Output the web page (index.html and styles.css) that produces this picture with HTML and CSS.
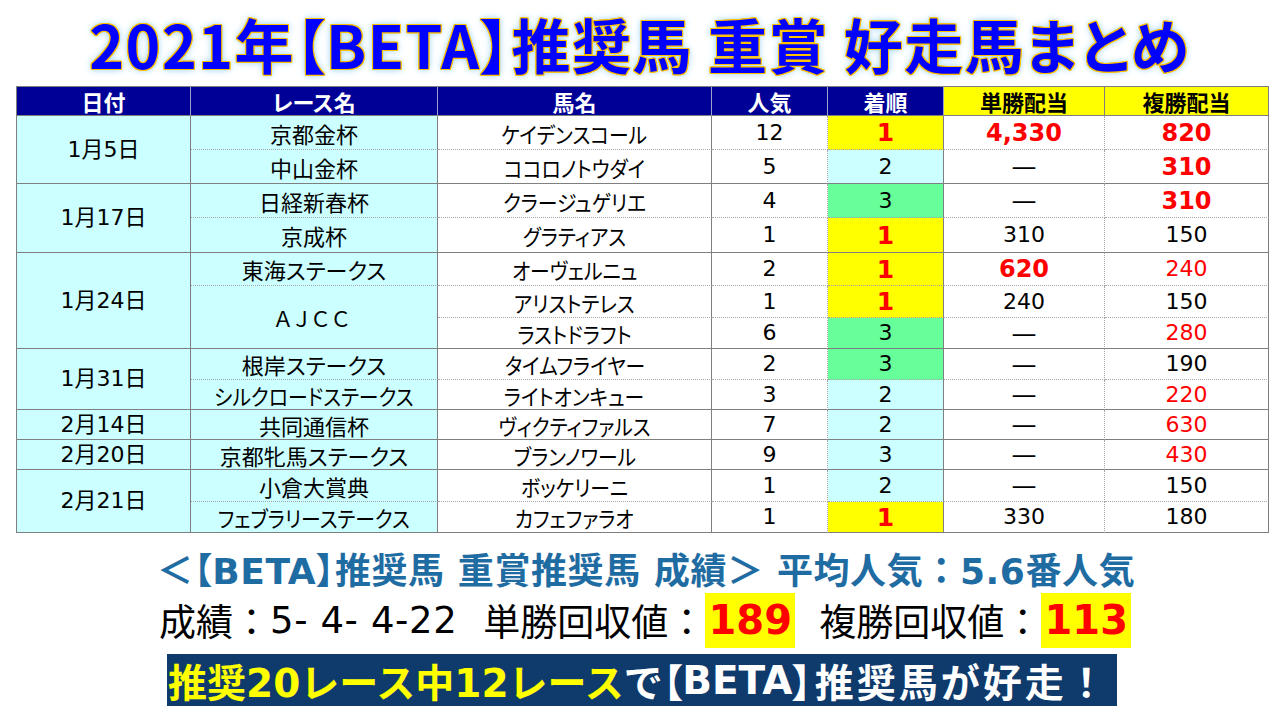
FILE: index.html
```html
<!DOCTYPE html>
<html lang="ja">
<head>
<meta charset="utf-8">
<title>2021年【BETA】推奨馬 重賞 好走馬まとめ</title>
<link rel="stylesheet" href="styles.css">
</head>
<body>
<div class="page">
  <h1 class="title">2021年【BETA】推奨馬 重賞 好走馬まとめ</h1>

  <table class="results">
    <colgroup>
      <col class="c-date"><col class="c-race"><col class="c-horse"><col class="c-pop"><col class="c-rank"><col class="c-win"><col class="c-place">
    </colgroup>
    <thead>
      <tr class="h-head">
        <th class="hd">日付</th>
        <th class="hd">レース名</th>
        <th class="hd">馬名</th>
        <th class="hd">人気</th>
        <th class="hd">着順</th>
        <th class="hd hd-y">単勝配当</th>
        <th class="hd hd-y">複勝配当</th>
      </tr>
    </thead>
    <tbody>
      <tr class="h34">
        <td class="date" rowspan="2">1月5日</td>
        <td class="race dot"><span>京都金杯</span></td>
        <td class="horse dot"><span>ケイデンスコール</span></td>
        <td class="num dot dr">12</td>
        <td class="num dot r1">1</td>
        <td class="num dot dr big">4,330</td>
        <td class="num dot big">820</td>
      </tr>
      <tr class="h34">
        <td class="race"><span>中山金杯</span></td>
        <td class="horse"><span>ココロノトウダイ</span></td>
        <td class="num dr">5</td>
        <td class="num r2">2</td>
        <td class="num dr dash">—</td>
        <td class="num big">310</td>
      </tr>
      <tr class="h34">
        <td class="date" rowspan="2">1月17日</td>
        <td class="race dot"><span>日経新春杯</span></td>
        <td class="horse dot"><span>クラージュゲリエ</span></td>
        <td class="num dot dr">4</td>
        <td class="num dot r3">3</td>
        <td class="num dot dr dash">—</td>
        <td class="num dot big">310</td>
      </tr>
      <tr class="h35">
        <td class="race"><span>京成杯</span></td>
        <td class="horse"><span>グラティアス</span></td>
        <td class="num dr">1</td>
        <td class="num r1">1</td>
        <td class="num dr">310</td>
        <td class="num">150</td>
      </tr>
      <tr class="h33">
        <td class="date" rowspan="3">1月24日</td>
        <td class="race dot"><span>東海ステークス</span></td>
        <td class="horse dot"><span>オーヴェルニュ</span></td>
        <td class="num dot dr">2</td>
        <td class="num dot r1">1</td>
        <td class="num dot dr big">620</td>
        <td class="num dot red">240</td>
      </tr>
      <tr class="h32">
        <td class="race" rowspan="2"><span class="ajcc">ＡＪＣＣ</span></td>
        <td class="horse dot"><span>アリストテレス</span></td>
        <td class="num dot dr">1</td>
        <td class="num dot r1">1</td>
        <td class="num dot dr">240</td>
        <td class="num dot">150</td>
      </tr>
      <tr class="h31">
        <td class="horse"><span>ラストドラフト</span></td>
        <td class="num dr">6</td>
        <td class="num r3">3</td>
        <td class="num dr dash">—</td>
        <td class="num red">280</td>
      </tr>
      <tr class="h31">
        <td class="date" rowspan="2">1月31日</td>
        <td class="race dot"><span>根岸ステークス</span></td>
        <td class="horse dot"><span>タイムフライヤー</span></td>
        <td class="num dot dr">2</td>
        <td class="num dot r3">3</td>
        <td class="num dot dr dash">—</td>
        <td class="num dot">190</td>
      </tr>
      <tr class="h30">
        <td class="race"><span class="kana">シルクロードステークス</span></td>
        <td class="horse"><span>ライトオンキュー</span></td>
        <td class="num dr">3</td>
        <td class="num r2">2</td>
        <td class="num dr dash">—</td>
        <td class="num red">220</td>
      </tr>
      <tr class="h30">
        <td class="date">2月14日</td>
        <td class="race"><span>共同通信杯</span></td>
        <td class="horse"><span>ヴィクティファルス</span></td>
        <td class="num dr">7</td>
        <td class="num r2">2</td>
        <td class="num dr dash">—</td>
        <td class="num red">630</td>
      </tr>
      <tr class="h30">
        <td class="date">2月20日</td>
        <td class="race"><span>京都牝馬ステークス</span></td>
        <td class="horse"><span>ブランノワール</span></td>
        <td class="num dr">9</td>
        <td class="num r2">3</td>
        <td class="num dr dash">—</td>
        <td class="num red">430</td>
      </tr>
      <tr class="h32">
        <td class="date" rowspan="2">2月21日</td>
        <td class="race dot"><span>小倉大賞典</span></td>
        <td class="horse dot"><span>ボッケリーニ</span></td>
        <td class="num dot dr">1</td>
        <td class="num dot r2">2</td>
        <td class="num dot dr dash">—</td>
        <td class="num dot">150</td>
      </tr>
      <tr class="h31">
        <td class="race"><span class="kana">フェブラリーステークス</span></td>
        <td class="horse"><span>カフェファラオ</span></td>
        <td class="num dr">1</td>
        <td class="num r1">1</td>
        <td class="num dr">330</td>
        <td class="num">180</td>
      </tr>
    </tbody>
  </table>

  <div class="summary">
    <p class="sum-title">＜<span class="br">【</span>BETA<span class="br">】</span>推奨馬 重賞推奨馬 成績＞ 平均人気：5.6番人気</p>
    <p class="sum-line"><span>成績：</span><span class="score">5- 4- 4-22</span><span class="lbl lbl1">単勝回収値：</span><span class="hit">189</span><span class="lbl lbl2">複勝回収値：</span><span class="hit">113</span></p>
    <div class="banner"><span class="yel">推奨20レース中12レース</span>で<span class="br">【</span>BETA<span class="br">】</span><span class="tail">推奨馬が好走！</span></div>
  </div>
</div>
</body>
</html>
```

FILE: styles.css
```css
html, body {
  margin: 0;
  padding: 0;
  background: #ffffff;
}

.page {
  width: 1280px;
  height: 720px;
  display: flex;
  flex-direction: column;
  font-family: "Noto Sans CJK JP", sans-serif;
  color: #000;
  overflow: hidden;
}

.title {
  margin: 0;
  height: 86px;
  display: flex;
  align-items: center;
  justify-content: center;
  font-size: 59px;
  font-weight: 700;
  letter-spacing: 1.5px;
  color: #0000ff;
  font-feature-settings: "palt";
  line-height: 1;
  box-sizing: border-box;
  white-space: nowrap;
  text-shadow:
    1px 0 #ffc000, -1px 0 #ffc000, 0 1px #ffc000, 0 -1px #ffc000,
    1px 1px #ffc000, -1px -1px #ffc000, 1px -1px #ffc000, -1px 1px #ffc000,
    0 0 5px #a8d8f5, 0 0 9px #a8d8f5;
}

/* ---------- table ---------- */
.results {
  margin-left: 16px;
  width: 1253px;
  table-layout: fixed;
  border-collapse: separate;
  border-spacing: 0;
  border-top: 1px solid #7f7f7f;
  border-left: 1px solid #7f7f7f;
}

.c-date { width: 174px; }
.c-race { width: 247px; }
.c-horse { width: 274px; }
.c-pop { width: 116px; }
.c-rank { width: 116px; }
.c-win { width: 161px; }
.c-place { width: 164px; }

.results th,
.results td {
  padding: 0;
  text-align: center;
  vertical-align: middle;
  border-right: 1px solid #7f7f7f;
  border-bottom: 1px solid #7f7f7f;
  box-sizing: border-box;
  white-space: nowrap;
  line-height: 1;
}

.h-head { height: 29px; }
.h35 { height: 35px; }
.h34 { height: 34px; }
.h33 { height: 33px; }
.h32 { height: 32px; }
.h31 { height: 31px; }
.h30 { height: 30px; }

.hd {
  background: #000096;
  color: #ffffff;
  font-size: 22px;
  font-weight: 700;
  font-feature-settings: "palt";
  border-right-color: #a0a0c8 !important;
}

.hd-y {
  background: #ffff00;
  color: #000;
  border-right-color: #7f7f7f !important;
}

.date {
  background: #ccffff;
  font-family: "DejaVu Sans", "Noto Sans CJK JP", sans-serif;
  font-size: 22px;
}

.race {
  background: #ccffff;
  font-size: 22px;
  font-feature-settings: "palt";
}

.race span,
.horse span {
  display: inline-block;
}

.race .kana {
  transform: scaleX(0.9);
}

.ajcc {
  font-size: 21px;
  letter-spacing: 4px;
}

.horse {
  font-size: 22px;
  font-feature-settings: "palt";
}

.horse span {
  transform: scaleX(0.9);
}

.num {
  font-family: "DejaVu Sans", "Noto Sans CJK JP", sans-serif;
  font-size: 22px;
}

.dash {
  font-size: 25px;
}

.dot { border-bottom: 1px dotted #a6a6a6 !important; }
.dr { border-right: 1px dotted #a6a6a6 !important; }

.r1 {
  background: #ffff00;
  color: #ff0000;
  font-weight: 700;
  font-size: 25px;
}

.r2 { background: #ccffff; }
.r3 { background: #66ff99; }

.big {
  color: #ff0000;
  font-weight: 700;
  font-size: 24px;
}

.red { color: #ff0000; }

/* ---------- summary ---------- */
.summary {
  display: flex;
  flex-direction: column;
  font-family: "DejaVu Sans", "Noto Sans CJK JP", sans-serif;
}

.br {
  font-family: "Noto Sans CJK JP", sans-serif;
  font-feature-settings: "palt";
}

.sum-title {
  margin: 17px 0 0 157px;
  height: 36px;
  line-height: 36px;
  font-size: 36px;
  font-weight: 700;
  letter-spacing: 0.6px;
  color: #1f6ca3;
  white-space: nowrap;
}

.sum-line {
  margin: 6px 0 0 159px;
  height: 56px;
  display: flex;
  align-items: center;
  font-size: 37px;
  white-space: nowrap;
}

.score {
  letter-spacing: 0.6px;
}

.lbl1 { margin: 0 0 0 26px; }
.lbl2 { margin: 0 0 0 24px; }

.hit {
  display: flex;
  align-items: center;
  justify-content: center;
  width: 90px;
  height: 55px;
  background: #ffff00;
  color: #ff0000;
  font-weight: 700;
  font-size: 40px;
}

.banner {
  margin: 6px 0 0 167px;
  width: 950px;
  height: 52px;
  box-sizing: border-box;
  padding-left: 1px;
  background: #0f3a6c;
  color: #ffffff;
  font-size: 39px;
  font-weight: 700;
  display: flex;
  align-items: center;
  white-space: nowrap;
}

.tail {
  margin-left: 3px;
  letter-spacing: 3px;
}

.yel { color: #ffff00; }
```
